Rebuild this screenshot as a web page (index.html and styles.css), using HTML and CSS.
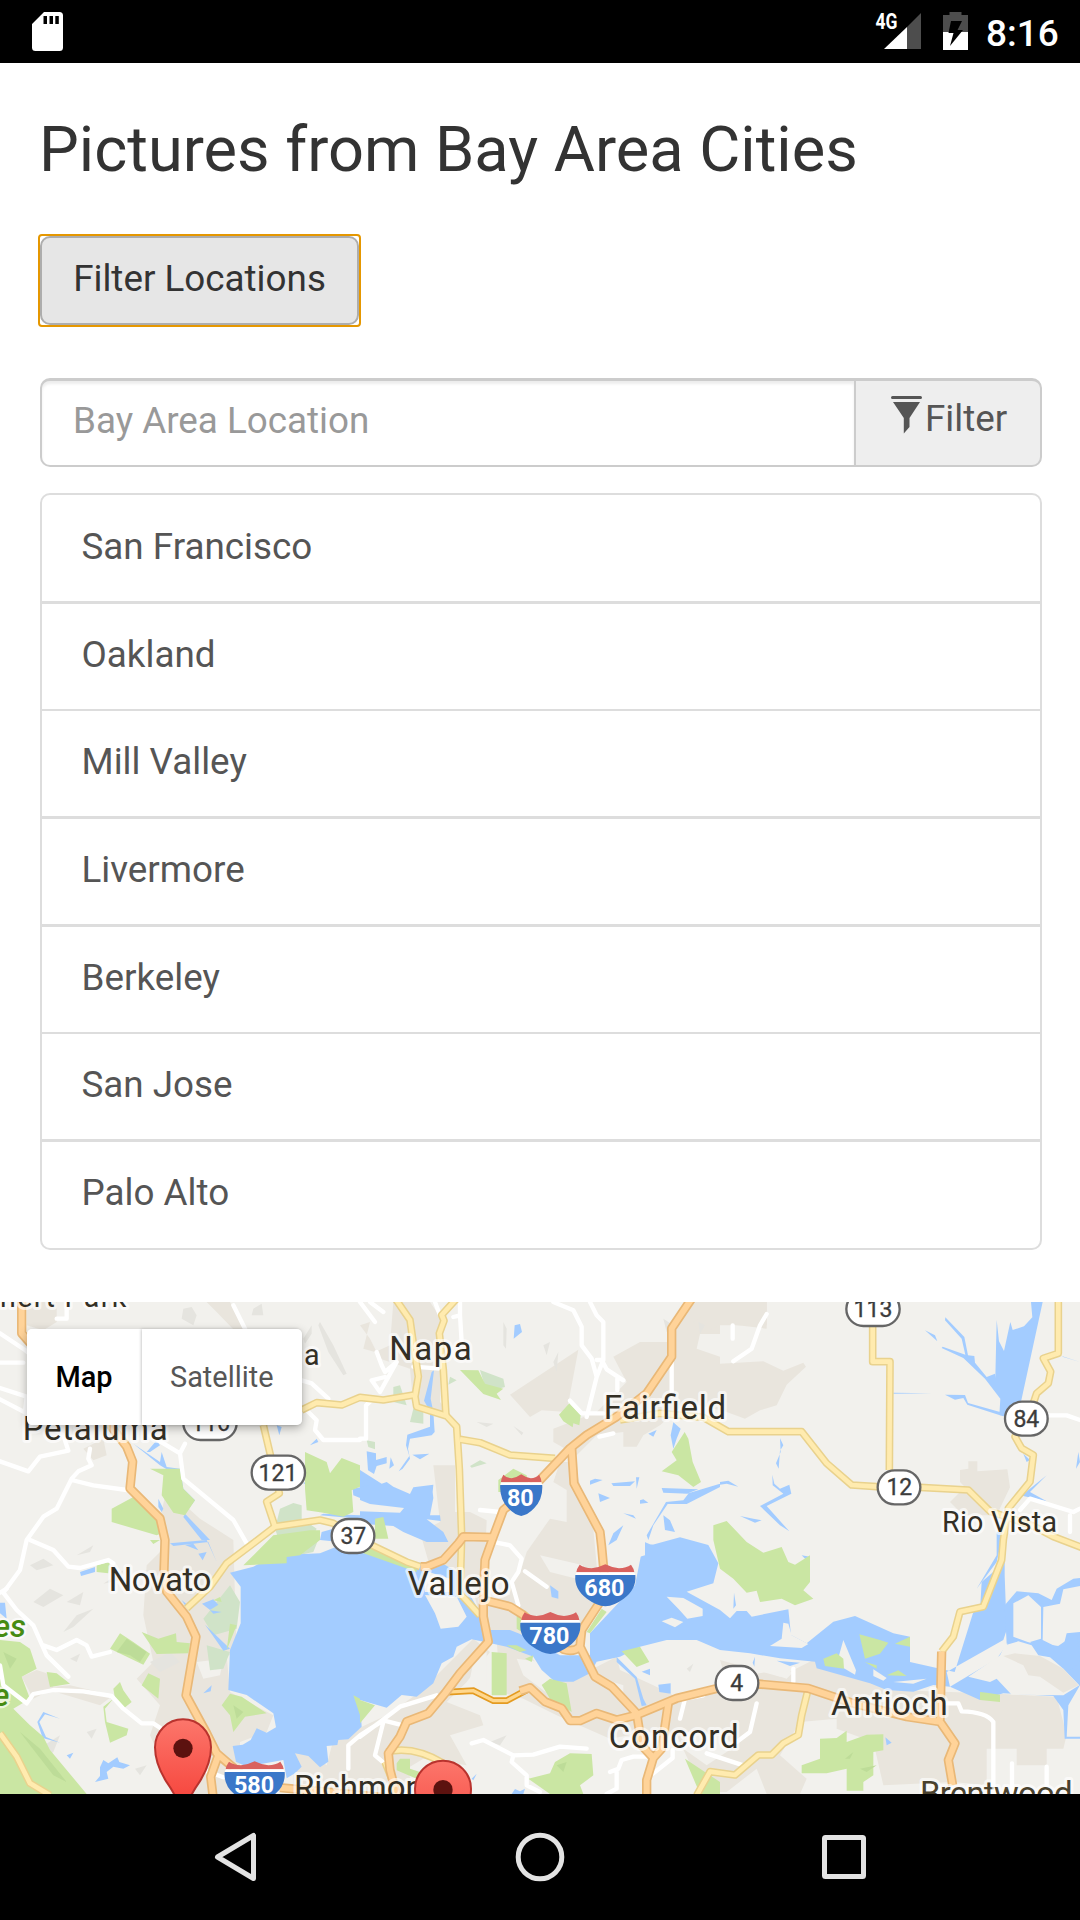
FILE: index.html
```html
<!DOCTYPE html>
<html lang="en">
<head>
<meta charset="utf-8">
<title>Pictures from Bay Area Cities</title>
<link rel="stylesheet" href="styles.css">
</head>
<body>
<div class="screen">
  <header class="status">
    <svg class="sd" width="31" height="39" viewBox="0 0 31 39"><path fill="#fff" fill-rule="evenodd" d="M12 0H27.500Q31 0 31 3.500V35.500Q31 39 27.500 39H3.500Q0 39 0 35.500V12ZM11.500 4V12H15V4ZM17.500 4V12H21V4ZM23.300 4V12H26.800V4Z"/></svg>
    <svg class="signal" width="48" height="40" viewBox="0 0 48 40">
      <path fill="#4d4d4d" d="M46 1V37H32V15Z"/><path fill="#fff" d="M32 15V37H9Z"/>
      <text class="network" x="0.500" y="17" textLength="22" lengthAdjust="spacingAndGlyphs">4G</text>
    </svg>
    <svg class="battery" width="25" height="38" viewBox="0 0 25 38"><path fill="#4d4d4d" d="M6.500 0H18.500V3H25V20H0V3H6.500Z"/><path fill="#fff" d="M0 20H25V38H0Z"/><path fill="#000" d="M8 9H19L14.500 18H20L7 34L10.500 21H5.500Z"/></svg>
    <span class="clock">8:16</span>
  </header>
  <main class="content">
    <h3 class="title">Pictures from Bay Area Cities</h3>
    <button class="toggle" type="button">Filter Locations</button>
    <div class="search">
      <div class="field">Bay Area Location</div>
      <div class="addon">
        <svg width="31" height="38" viewBox="0 0 31 38"><path fill="#555" d="M1.500 0H29.500Q31 0 31 1.500T29.500 3H1.500Q0 3 0 1.500T1.500 0ZM2 6H29L18.500 22V31L12.800 37.500V22Z"/></svg><span>Filter</span>
      </div>
    </div>
    <ul class="places">
      <li>San Francisco</li><li>Oakland</li><li>Mill Valley</li><li>Livermore</li><li>Berkeley</li><li>San Jose</li><li>Palo Alto</li>
    </ul>
  </main>
  <section class="map">
    <svg class="canvas" width="1080" height="492" viewBox="0 0 3240 1476">
      <defs>
        <linearGradient id="pinfill" x1="0" y1="0" x2="0" y2="1"><stop offset="0" stop-color="#fc766b"/><stop offset="1" stop-color="#f53a32"/></linearGradient>
        <g id="interstate"><path fill="#d9625f" d="M14 2Q28 12 50 13Q74 10 91 1Q108 10 132 13Q154 12 168 2Q177 14 178 25H4Q5 14 14 2Z"/><path fill="#fff" d="M4 25H178L181 34H1Z"/><path fill="#3a77c9" d="M1 33H181Q185 76 146 104Q118 125 91 127Q64 125 36 104Q-3 76 1 33Z"/></g>
        <g id="pin"><path fill="url(#pinfill)" stroke="#b9332e" stroke-width="6" d="M0 220Q-6 165 -50 103C-72 68 -84 30 -84 0A84 84 0 0 1 84 0C84 30 72 68 50 103Q6 165 0 220Z"/><circle cy="3" r="29" fill="#5c120f"/></g>
        <g id="yellows">
          <path d="M905 324L950 302L1025 309L1080 286L1150 294L1240 279M790 369L810 454L838 574L800 599L825 674"/>
          <path d="M1260 794L1220 780L1120 732L1000 664L960 654L825 674L760 724L680 784L630 854L560 919"/>
          <path d="M1186 -10L1230 54L1240 124L1255 224L1245 284L1250 314L1340 342L1370 374L1378 500L1385 704L1380 874L1440 940"/>
          <path d="M1368 -8L1325 39L1332 56L1318 94L1330 204L1338 342M1380 412L1440 422L1530 459L1665 469"/>
          <path d="M1860 354L1980 334L2110 346L2185 389H2405L2480 484L2555 549L2630 554L2760 556L2905 564L2970 628L3100 672L3160 704L3260 742"/>
          <path d="M2618 60V179H2670L2668 504"/>
          <path d="M3175 -5V154L3130 169L3152 209L3145 244L3110 274L3100 304L3045 404L3065 439L3100 459L3090 539L3025 619L3010 714L3005 774L2950 914L2880 929L2860 1004L2825 1049"/>
          <path d="M2425 1159L2405 1240L2395 1299L2350 1324L2315 1359H2275L2205 1419L2130 1409L2090 1480"/>
          <path d="M0 1294L50 1364L90 1444L150 1480M1160 1350Q1240 1330 1330 1384M1155 1380L1175 1430"/>
        </g>
        <g id="oranges">
          <path d="M65 -10V94L100 134L330 369L380 434L398 479L390 559L480 649L495 714L492 804L500 869L560 944L588 1004L558 1180L620 1294L650 1354L720 1414M655 1360L632 1424L640 1490M840 1457L960 1468L1190 1490"/>
          <path d="M2075 -10L2015 79V164L1940 274L1850 344L1760 399L1710 439L1620 534L1510 624L1480 704L1455 774L1450 894V944L1465 1019L1380 1114L1335 1174L1285 1234L1220 1259L1200 1304L1165 1354L1170 1404L1190 1480"/>
          <path d="M1480 706L1390 704L1375 724L1330 774L1280 794L1262 794M1450 894L1530 914L1570 939L1690 1042Q1720 1052 1740 1034"/>
          <path d="M1715 439L1722 544L1800 690L1805 734L1812 810L1800 900L1745 984L1740 1034L1785 1124L1835 1154L1910 1234L1925 1330L1960 1368L1940 1434V1490M2005 1204L1985 1340L1960 1368"/>
          <path d="M1560 1167L1590 1157L1635 1199L1685 1219L1710 1256H1740L1790 1234L1850 1254L1910 1239L2030 1189L2160 1157L2275 1146L2425 1159L2560 1204L2720 1244L2820 1259L2865 1324L2845 1374L2858 1450M2825 1049L2820 1254"/>
        </g>
      </defs>
      <rect width="3240" height="1476" fill="#f2f1ed"/>

      <g class="urban">
        <path d="M80 0H170V60L130 85L80 70ZM620 0H690L730 80L700 82L650 30ZM250 440L310 410L320 460L280 475Z"/>
        <path d="M1080 70L1110 60L1090 140L1125 150L1170 130L1180 0H1290L1330 60L1320 300L1350 340H1290L1240 310L1230 200L1140 170L1110 110Z"/>
        <path d="M1530 278L1735 143L1700 330L1625 325L1590 345ZM1840 164L1920 120H2010L2070 0H2300V80L2160 64V96L2100 96L2090 140L2160 164L2160 185L2290 178L2350 206L2410 182L2418 194L2360 248L2330 310L2280 325L2235 350L2180 330L2060 300L1980 370L1930 400L1910 434H1870V390L1790 400L1730 460L1660 420V380L1790 330L1880 240Z"/>
        <path d="M2080 60L2110 40V15H2240V0H2300V70H2160L2100 96Z"/>
        <path d="M2880 504L2905 500V478H2932V508L3022 502L3030 556L2990 640H2890L2850 600L2895 555L2880 540Z"/>
        <path d="M1300 490H1365V630H1410L1460 655L1450 900L1560 870L1620 930L1560 1000L1450 980L1410 830L1300 830L1260 690L1320 660Z"/>
        <path d="M1560 814L1580 750L1650 650L1700 660V564L1660 540L1680 480L1720 480L1780 680L1800 900L1735 1050L1600 1000L1530 930V834Z"/>
        <path d="M500 560L600 650L700 714L710 1060L680 1060L690 1170L820 1240L800 1290L720 1320L720 1476H530L450 1300L480 1210L410 1130L460 1080L430 940L440 790L480 750L480 650Z"/>
        <path d="M65 1124L110 1104L140 1114L160 1154L210 1150L340 1180L300 1210L150 1165L100 1190ZM560 1000L640 1050L600 1180L570 1150Z"/>
        <path d="M880 1345L925 1350L980 1390L1000 1314L1160 1240L1260 1170L1380 1050L1420 1010L1470 1050L1400 1140L1340 1200L1440 1240L1450 1270L1350 1300L1400 1390L1270 1370L1220 1400L1250 1476H880Z"/>
        <path d="M1490 1010L1590 1060L1650 1140L1740 1120L1850 1064L1860 1104L1960 1150L2040 1190L2180 1140L2160 1074L2340 1124L2440 1074L2600 1130L2680 1164L2960 1174L3170 1184L3200 1300L3190 1340H3140V1390H3050V1340L2960 1340V1450L2860 1440L2650 1450L2620 1320L2510 1280V1250L2400 1260L2340 1360L2420 1430L2400 1476H2300L2270 1400L2180 1470H2110L2030 1300L1940 1290L1830 1310L1670 1240L1570 1190L1500 1170Z"/>
      </g>
      <g class="clearings">
        <path d="M1420 1080L1460 1050V1160L1400 1180ZM1550 1070L1620 1080L1680 1170L1650 1180L1570 1120ZM1840 1140L1870 1150V1175ZM2150 1100L2230 1090L2380 1110L2360 1130L2300 1110L2180 1130ZM2060 1290L2160 1300L2210 1330L2120 1390L2050 1340ZM1620 760L1750 790L1730 830L1650 810Z"/>
        <path d="M310 1220L360 1200L450 1270L380 1320ZM590 1080L670 1070L660 1120L610 1130Z"/>
      </g>
      <g class="terrain">
        <path d="M550 20L575 15L590 40L580 70L545 50ZM760 20L785 5L790 40L755 40ZM910 110L935 70V95L915 125ZM960 60L1000 130L1040 215L1030 220L985 150L955 70ZM1200 75L1210 110L1195 120ZM1510 60L1520 80L1518 140L1510 130ZM1630 130L1650 120L1640 160ZM1660 180L1675 150L1670 210ZM1430 360L1480 365L1460 375ZM1540 372L1570 392L1565 400ZM2095 60L2115 70L2100 95ZM1990 50L2020 70L2000 90Z"/>
        <path d="M100 900L150 860L190 880L130 915ZM200 900L250 870L240 910ZM310 845L370 805L360 835ZM190 990L230 940L280 920L220 975ZM90 790L130 770L160 790L110 805ZM230 760L280 730L270 750ZM450 1080L510 1050L540 1080L480 1110ZM100 1350L180 1300L160 1350L120 1380ZM260 1290L290 1280L275 1310ZM405 1400L440 1390L420 1420ZM210 1070L240 1055L230 1080ZM2060 1100L2080 1085L2070 1110ZM1470 1320L1520 1300L1500 1330Z"/>
      </g>
      <g class="marsh">
        <path d="M840 620L880 603L905 610V650L950 680L930 720L840 724L825 680ZM610 950L690 850L720 900L710 980L640 1000ZM620 1030L690 1050L670 1100L630 1105ZM1180 255L1200 250L1220 310L1180 300ZM1240 320L1270 315V365L1230 360ZM1100 415L1125 420V442L1105 435ZM1350 224L1370 235L1345 248ZM1440 204L1510 230L1515 255L1460 270ZM1410 492L1440 475L1460 484L1415 497ZM840 700H960L940 750L800 780Z"/>
      </g>
      <g class="water">
        <path d="M690 812L722 854V964L690 1044L685 1164L740 1179L820 1234L828 1276L800 1292L770 1279L752 1314L728 1328L698 1332L708 1379L740 1394L850 1374L860 1429L885 1414L905 1394L885 1354L925 1362L960 1396L985 1379L980 1332L1012 1329L1015 1314L1045 1312L1085 1274L1080 1194L1160 1217L1205 1179L1250 1184L1300 1144L1325 1084L1360 1064L1370 1034L1415 1012L1465 1022L1520 1034L1600 1064L1625 1104L1665 1139H1720L1770 1114L1790 1079L1860 1064L1920 1034L2000 1014H2090L2160 1044L2250 1054L2340 1069L2445 1079L2450 1099L2610 1144L2660 1164L2740 1169L2800 1149L2850 1154L2940 1194L3010 1174L3160 1182L3190 1224L3194 1310H3240V1304H3200L3205 1210L3240 1150V990L3200 994L3190 1034L3110 1022H3025L2990 1070L2850 1154L2840 1110L3010 1014L3020 984L3014 820L3000 870L3014 900V780L2945 840L2941 910L2920 930L2864 1110L2730 1080V1004L2680 994L2565 942L2500 959L2420 1024L2373 999L2365 922L2255 944L2240 927H2210L2190 949L2160 924L2060 869L2140 844L2155 784L2125 729L2040 706L1955 729L1920 714L1925 750L1905 850L1770 994L1770 1060H1680L1570 1000L1530 984H1470L1370 809L1320 780L1220 784L1060 714L960 754L830 760L760 794Z"/>
        <path d="M1080 504L1145 545L1160 540L1180 554L1230 576L1240 556L1300 548L1298 570L1300 588L1290 640L1320 640L1322 657L1280 652L1330 690L1345 720H1280L1210 690L1180 672L1080 665V628L1200 632L1212 618L1110 606L1080 594Z"/>
        <path d="M1100 448L1128 454V474L1160 465V484L1130 492L1122 516L1104 505ZM1172 466L1182 490L1168 500ZM1237 458L1288 455L1260 472ZM1222 398L1290 374V328L1272 296L1295 210L1302 205L1292 290L1300 330L1304 390L1295 400L1230 410L1224 440L1230 470L1208 500L1196 508L1228 462L1218 430ZM1544 70L1560 66L1566 90L1541 110Z"/>
        <path d="M440 450L470 415L480 430L450 450ZM485 450L500 495L540 500L550 560L585 595L555 635L630 714H605L550 645L575 600L540 560L530 520L480 490L400 425L480 480ZM830 370L845 375L838 400ZM930 430L950 410L955 420ZM915 540H980L1000 532L910 546ZM1058 560L1110 550V600L1060 580ZM970 635L1080 640V650L960 640ZM965 690L1000 680L1020 720L960 714ZM475 590L490 620L485 630L475 615ZM510 724L620 714L650 780L625 720L520 732ZM555 729L580 725L595 745ZM595 755L620 750L608 775ZM545 894L555 910L570 915ZM606 905L640 892L655 908L630 924ZM630 925L665 930L640 935ZM615 968L690 1040L670 1046L645 1010ZM240 810L285 795V810L243 822ZM0 902H15L20 950L0 934ZM610 1174L635 1150L632 1168ZM112 1260L130 1230L180 1250L135 1237L118 1260L138 1305L180 1322L128 1308ZM200 1360L220 1352L210 1370ZM310 1374L325 1384L352 1366L358 1380L390 1390L370 1400L340 1394L320 1410L325 1430L285 1440L300 1422V1396Z"/>
        <path d="M2990 54L2997 118L3012 147L3031 60L3038 84L3072 73L3097 46L3093 0H3128L3064 295L3042 350L2998 340L3001 290L2955 230L2890 168L2825 138L2828 134L2896 158L2885 110L2835 55L2836 46L2893 105L2904 160L2923 162L2925 182L2960 225L2985 215L2986 228ZM2775 85L2805 100L2812 118ZM2680 272L2795 274L2680 275ZM2835 278L2895 279L2904 303L3000 330V340L2902 308L2890 288L2865 293Z"/>
        <path d="M2340 409L2350 430L2340 446L2336 500L2328 484L2342 450ZM2317 518L2323 545L2340 560L2368 548L2374 575L2300 612L2368 688L2340 670L2280 612L2350 575L2318 550ZM2220 642L2260 650L2285 655L2265 662ZM2160 540L2185 536L2215 554L2180 545L2160 548ZM1770 536L1785 530L1808 534L1770 548ZM1834 544L1905 538L1890 552L1840 552ZM1908 526L1918 526L1910 560ZM1795 574L1830 588L1800 600ZM1985 558L2095 562L2060 575L2160 545V555L2060 606H2003L1960 670L1945 714L1940 700L1998 600L2050 595L2065 575L1990 572ZM1920 595L1930 592L1945 602L1920 605ZM2020 361L2042 380L2030 410L2020 440L2012 400ZM1945 395L1970 384L1960 404ZM1990 640L2010 655L2025 690L1995 684ZM1840 694L1870 670L1850 714L1825 730ZM1870 634L1900 640L1908 650ZM1930 734L1960 726L1920 750ZM1650 850L1675 868V890L1655 885ZM3185 162L3240 180L3190 165ZM3070 455L3090 474L3080 480ZM3060 584L3140 520L3090 570L3140 598L3060 580ZM2990 690L3010 690L2990 780L2930 860L2990 760ZM3235 450L3240 480L3228 500Z"/>
        <path d="M2405 760L2430 764V785ZM2202 872L2208 910L2200 920ZM2258 1082L2265 1064L2263 1094ZM2330 1076L2400 1082L2370 1092ZM1975 1148L2012 1144V1175L1978 1170ZM1850 1065L1910 1125L1930 1190L1940 1210L1925 1212L1905 1130L1850 1080ZM1925 1109L1950 1100V1120ZM1535 1476L1545 1461L1560 1468L1575 1460L1570 1476ZM1415 1430L1430 1415L1420 1435ZM2597 1316L2620 1308V1324ZM2656 1306L2675 1322L2660 1330ZM3014 910L3050 868L3115 874L3155 894L3170 860L3220 830L3240 828V852L3190 862L3180 905L3130 915L3128 1014L3170 1035L3230 994L3240 1080L3190 1120L3140 1060L3090 1020L3123 1010V915L3085 880L3040 904V1004L3110 1030L3020 1025Z"/>
      </g>
      <g class="land">
        <path d="M1275 879L1370 884L1400 944L1375 974L1322 980L1305 934ZM1270 805L1350 830L1360 870L1275 870Z"/>
        <path d="M2000 884L2050 888L2065 896L2108 920V942L2062 950L2035 920ZM1985 958L2015 947L2050 960L2025 976ZM1875 726L1910 714H1935L1935 760L1900 770L1880 755Z"/>
        <path d="M2310 1032L2345 1010L2350 962L2365 965L2375 1000L2425 1026L2405 1038ZM2530 1014L2568 1105L2565 1118L2510 1086ZM2620 1102L2660 1128L2650 1136L2620 1122ZM2680 1140L2780 1130L2740 1145ZM2905 1124L3000 1060L3015 1030L3055 1018L3095 1030L3115 1060L3150 1066L3190 1100L3238 1150L3190 1180L3035 1178L2990 1130L2970 1140Z"/>
      </g>
      <path class="urban" d="M3010 1062L3045 1054L3120 1062L3190 1100L3236 1150L3190 1172L3120 1124L3085 1120L3070 1090Z"/>
      <g class="park">
        <path d="M915 450L980 480L990 514L1025 468L1080 490V554L1055 565L1060 630L1030 644L970 632L920 625L915 560ZM450 500L540 500L550 560L585 595L555 640L520 632L485 580L490 520ZM335 620L400 585L440 610L495 690L470 700L335 660Z"/>
        <path d="M1380 204L1435 205L1455 245L1510 260L1490 275L1503 294L1450 276L1420 245ZM1677 338L1708 304L1742 340L1738 370L1720 364L1718 376L1690 358ZM1495 534L1540 500L1580 520L1590 570H1495ZM2054 390L2065 410L2078 480L2103 540L2080 555L2035 520L1985 508L2030 475L2015 450ZM1125 650L1150 645L1165 710L1125 710ZM2140 714V670L2180 657L2240 720L2290 752L2345 735L2365 780L2385 788L2430 760V840L2410 865L2440 890L2385 910L2345 890L2280 900L2270 866L2240 872L2200 830L2160 800Z"/>
        <path d="M730 790L820 700L930 685H960V714L900 760L860 765V784ZM710 970L680 1045L690 965ZM640 895L660 885L665 900ZM290 790L330 780L325 814L290 810ZM450 714H480L460 726ZM330 1040L360 994L400 1020L450 1055L430 1088ZM425 990L475 1010L528 994L530 1020L570 1024L565 1054L470 1056ZM140 1110L170 1114L210 1145L150 1155ZM425 1150L445 1114L480 1130L475 1190ZM340 1160L360 1140L370 1165L395 1200L370 1220L345 1190ZM310 1214L340 1190L315 1220L320 1260L385 1280L380 1300L330 1322L315 1260Z"/>
        <path d="M0 1014L60 1020L90 1040L110 1100L65 1124L90 1190L40 1220L90 1270L130 1304L150 1344L260 1476H0ZM665 1210L690 1175L725 1184L800 1234L735 1244L700 1290L690 1240ZM1060 1180L1080 1190V1240ZM1080 724L1250 780L1250 810L1080 750Z"/>
        <path d="M1475 1050L1520 1054V1180H1475ZM1520 1030H1550L1580 1045L1560 1050ZM1575 1070L1600 1060L1595 1080ZM1625 1149L1650 1130L1700 1144L1715 1230L1650 1190ZM1080 1194L1125 1210L1080 1264ZM1190 1384L1200 1370H1230V1400L1260 1410L1250 1430L1190 1405ZM1550 930L1565 940V990L1550 980ZM1760 990L1805 920L1820 930L1770 994ZM1865 1048L1920 1034L1948 1080L1910 1095ZM1585 1430L1650 1414L1665 1380L1710 1354L1775 1356L1780 1420L1740 1450L1750 1476H1650ZM2055 1370L2160 1440V1476H2100Z"/>
        <path d="M2578 997L2640 1014L2665 1022L2640 1055L2595 1070ZM2470 1070L2510 1054L2530 1070L2532 1100L2475 1092ZM2595 1080L2630 1090V1100ZM2660 1120L2695 1105L2720 1122ZM2685 1025L2730 1004V1034ZM2940 1170L2960 1172L3000 1178V1200L2940 1194ZM2405 1390L2460 1370V1310L2510 1308L2540 1286V1320L2600 1298L2650 1297V1345L2620 1350V1420L2590 1440V1466H2540V1400L2480 1414H2405Z"/>
      </g>
      <g class="parkshade">
        <path d="M350 1050L380 1010L440 1050L420 1080L390 1060ZM10 1050L50 1070L30 1100ZM60 1290L120 1340L200 1440L160 1420L90 1330ZM1670 1390L1700 1380L1690 1410ZM2535 1370L2560 1350L2550 1370ZM2580 1400L2630 1390L2600 1410ZM700 1210L730 1230L710 1250Z"/>
      </g>

      <g class="local">
        <path d="M0 94L75 144L130 190M0 182H70M200 0V50H170M0 258L80 284L75 330M0 292L130 360L190 400L205 446L120 464L85 508L0 478M270 440L265 470L275 490L235 508L215 530L170 620L130 644L80 714L60 804L10 872M215 534L280 550L380 564M450 400L540 454L550 530L700 654L740 724M540 454L555 425M700 10L735 80M905 235L935 244L985 290M925 330L950 355L945 384L970 414H1080"/>
        <path d="M90 714L160 744L205 794L240 798L325 774L340 784M10 872L50 924L100 970L140 1060L205 1124M0 872L20 860M130 1030L170 1044L230 1014L260 1030L275 1064L330 1050M0 1090L10 1150L80 1204L100 1176L160 1164L250 1168L335 1182L370 1220L425 1264H460L490 1284M600 1400L670 1426M1045 1400V1330L1080 1300L1150 1255L1200 1268M1080 1304L1140 1260L1200 1214L1310 1180M1150 1260L1125 1360L1160 1390"/>
        <path d="M1080 0L1125 60M1110 0L1150 30M1130 150L1145 190L1155 210L1190 180L1140 270L1115 235L1155 225M1080 410H1098V310L1120 290M1305 0L1320 40M1360 45L1380 40L1385 120M1380 0V40M1240 194L1320 200M1660 0L1720 25L1745 74V130L1775 170L1790 225L1760 345M1770 0L1790 40L1810 60V174L1790 225M1790 174H1805L1820 202L1870 235M1852 230V265M1710 296L1745 334H1810M2015 180V280M1798 404L1840 394M1440 624L1500 630"/>
        <path d="M2300 36L2280 70L2255 140L2200 178M2198 70V110M3120 340H3200L3240 354M3060 624L3090 590L3220 630L3240 620M3210 640V690M1490 722L1530 730L1565 770L1555 810L1535 840L1555 910M1575 808L1640 854"/>
        <path d="M1415 1324L1450 1314L1540 1360L1600 1358L1680 1334L1760 1340M1540 1360L1535 1380L1580 1420V1450L1620 1470M1830 1410L1855 1400L1865 1374L1900 1364H1940M1850 1410V1460L1820 1476M1960 1414L2018 1368V1344M2040 1250L2055 1190L2110 1180M2270 1204L2250 1290L2210 1320M2120 1354L2230 1390M2840 1204H2875L2885 1228Q2960 1230 2980 1260V1476M3036 1384V1476M3140 1394V1476M2380 1100V1140"/>
      </g>

      <use class="casing yellow-casing" href="#yellows"/><use class="fill yellow-fill" href="#yellows"/>
      <path class="connector-casing" d="M1330 1171L1420 1166L1480 1196H1520L1580 1164"/><path class="connector-fill" d="M1330 1171L1420 1166L1480 1196H1520L1580 1164"/>
      <use class="casing orange-casing" href="#oranges"/><use class="fill orange-fill" href="#oranges"/>

      <use href="#interstate" transform="translate(1500 516) scale(.7 .99)"/>
      <use href="#interstate" x="1725" y="786"/><use href="#interstate" x="1560" y="929"/><use href="#interstate" x="673" y="1377"/>
      <g class="interstate-text">
        <text x="1561" y="611">80</text><text x="1813" y="882">680</text><text x="1648" y="1025">780</text><text x="762" y="1473">580</text>
      </g>
      <g class="pill">
        <rect x="550" y="312" width="160" height="102" rx="51"/><rect x="755" y="461" width="160" height="102" rx="51"/><rect x="2539" y="-30" width="160" height="102" rx="51"/><rect x="3015" y="299" width="128" height="102" rx="51"/><rect x="2633" y="505" width="128" height="102" rx="51"/><rect x="995" y="651" width="128" height="102" rx="51"/><rect x="2147" y="1092" width="128" height="102" rx="51"/>
      </g>
      <g class="pill-text">
        <text x="632" y="386">116</text><text x="834" y="537">121</text><text x="2619" y="44">113</text><text x="3079" y="375">84</text><text x="2698" y="580">12</text><text x="1060" y="726">37</text><text x="2210" y="1166">4</text>
      </g>
      <g class="label">
        <text class="small" x="0" y="16" textLength="379">nert Park</text>
        <text class="small" x="959" y="189" text-anchor="end">a</text>
        <text x="68" y="413" textLength="435">Petaluma</text>
        <text x="1168" y="174" textLength="247">Napa</text>
        <text x="1811" y="351" textLength="367">Fairfield</text>
        <text x="1223" y="879" textLength="306">Vallejo</text>
        <text x="326" y="866" textLength="308">Novato</text>
        <text class="small" x="2826" y="689" textLength="345">Rio Vista</text>
        <text x="2493" y="1240" textLength="350">Antioch</text>
        <text x="1826" y="1338" textLength="390">Concord</text>
        <text x="882" y="1490">Richmond</text>
        <text class="brown" x="2760" y="1509" textLength="458">Brentwood</text>
      </g>
      <g class="reserve"><text x="78" y="1006">es</text><text x="28" y="1211">e</text></g>
      <use href="#pin" x="549" y="1336"/><use href="#pin" x="1329" y="1460"/>
    </svg>
    <div class="map-type"><span class="selected">Map</span><span class="other">Satellite</span></div>
  </section>
  <nav class="keys">
    <svg width="44" height="50" viewBox="0 0 44 50"><path d="M39.500 3.500V46.500L3.500 25Z"/></svg>
    <svg width="50" height="50" viewBox="0 0 50 50"><circle cx="25" cy="25" r="21.800"/></svg>
    <svg width="44" height="44" viewBox="0 0 44 44"><rect x="2.500" y="2.500" width="39" height="39" rx="1"/></svg>
  </nav>
</div>
</body>
</html>
```
FILE: styles.css
```css
* { box-sizing: border-box; }
body { margin: 0; background: #fff; font-family: Roboto, sans-serif; font-size: 36.8px; line-height: 52.5px; color: #333; }
.screen { width: 1080px; height: 1920px; display: flex; flex-direction: column; overflow: hidden; }
.status { height: 63px; background: #000; display: flex; align-items: flex-start; padding: 12px 20px 0 32px; }
.signal { margin-left: auto; overflow: visible; }
.network { font-size: 22px; font-weight: 700; fill: #fff; }
.battery { margin-left: 20px; }
.clock { margin: 1px 0 0 18px; width: 74px; color: #fff; font-size: 37px; font-weight: 500; line-height: 42px; white-space: nowrap; }

.content { height: 1239px; padding: 52px 38px 0 40px; display: flex; flex-direction: column; align-items: stretch; }
.title { margin: 0 0 0 -1px; font-size: 63.15px; font-weight: 400; line-height: 69px; }
.toggle { position: relative; align-self: flex-start; width: 319px; height: 89px; margin: 52px 0 0; padding: 0 0 3px; border: 2px solid #adadad; border-radius: 10px; background: #e6e6e6; color: #333; font: inherit; }
.toggle::after { content: ""; position: absolute; inset: -4px; border: 2px solid #e59700; border-radius: 4px; }
.search { display: flex; height: 89px; margin-top: 53px; }
.field { flex: 1; border: 2px solid #ccc; border-top-width: 3px; border-right: 0; border-radius: 10px 0 0 10px; padding: 13.5px 31px; color: #999; box-shadow: inset 0 3px 3px rgba(0,0,0,.075); }
.addon { width: 188px; border: 2px solid #ccc; border-top-width: 3px; border-radius: 0 10px 10px 0; background: #eee; color: #555; display: flex; padding: 12px 0 0 35px; gap: 3px; }
.addon svg { margin-top: 3px; }
.places { list-style: none; margin: 26px 0 0; padding: 0; border: 2px solid #ddd; border-radius: 10px; height: 757px; }
.places li { height: 107.625px; padding: 25px 0 0 39.5px; color: #555; }
.places li:first-child { height: 106px; padding-top: 26px; }
.places li + li { border-top: 2px solid #ddd; }
.places li:nth-child(2), .places li:nth-child(4), .places li:nth-child(5), .places li:nth-child(7) { border-top-width: 3px; }

.map { position: relative; height: 492px; overflow: hidden; }
.canvas { display: block; }
.map-type { position: absolute; left: 27px; top: 26.5px; display: flex; height: 96.5px; border-radius: 5px; box-shadow: 0 3px 10px rgba(0,0,0,.3); font-size: 28.9px; line-height: 97px; }
.selected { width: 115px; padding-left: 28.5px; background: #fff; color: #000; font-weight: 500; border-radius: 5px 0 0 5px; }
.other { width: 160px; padding-left: 28px; background: #fff; color: #565656; border-radius: 0 5px 5px 0; box-shadow: -1px 0 3px rgba(0,0,0,.2); }
.urban { fill: #e9e5dd; }
.clearings, .land { fill: #f2f1ed; }
.terrain { fill: #e5e4df; }
.marsh { fill: #d0e3c8; }
.water { fill: #a3ccff; }
.park { fill: #cae6a3; }
.parkshade { fill: #bddc98; }
.local { fill: none; stroke: #fff; stroke-width: 13; stroke-linejoin: round; stroke-linecap: round; }
.casing, .fill { fill: none; stroke-linejoin: round; }
.casing { stroke-width: 28; }
.fill { stroke-width: 18; }
.yellow-casing { stroke: #e9d28d; stroke-width: 23; }
.yellow-fill { stroke: #ffebaf; stroke-width: 14; }
.orange-casing { stroke: #e9b877; }
.orange-fill { stroke: #ffd399; }
.connector-casing { fill: none; stroke: #e49b21; stroke-width: 20; }
.connector-fill { fill: none; stroke: #ffd78d; stroke-width: 10; }
.pill { fill: #fff; stroke: #666; stroke-width: 7; }
.pill-text { font-size: 69px; fill: #3c3c3c; stroke: #3c3c3c; stroke-width: 1; text-anchor: middle; }
.interstate-text { font-size: 70px; font-weight: 700; fill: #fff; text-anchor: middle; }
.label { font-size: 99px; fill: #332f25; stroke: #fff; stroke-opacity: .65; stroke-width: 18; stroke-linejoin: round; paint-order: stroke; }
.label .small { font-size: 86px; }
.label .brown { fill: #4a412d; }
.reserve { font-size: 96px; font-weight: 500; font-style: italic; fill: #468b12; stroke: #fff; stroke-opacity: .65; stroke-width: 14; paint-order: stroke; text-anchor: end; }

.keys { flex: 1; background: #000; display: flex; align-items: center; justify-content: space-between; padding: 0 214px; }
.keys svg { fill: none; stroke: #e3e3e3; stroke-width: 5; stroke-linejoin: round; }
```
